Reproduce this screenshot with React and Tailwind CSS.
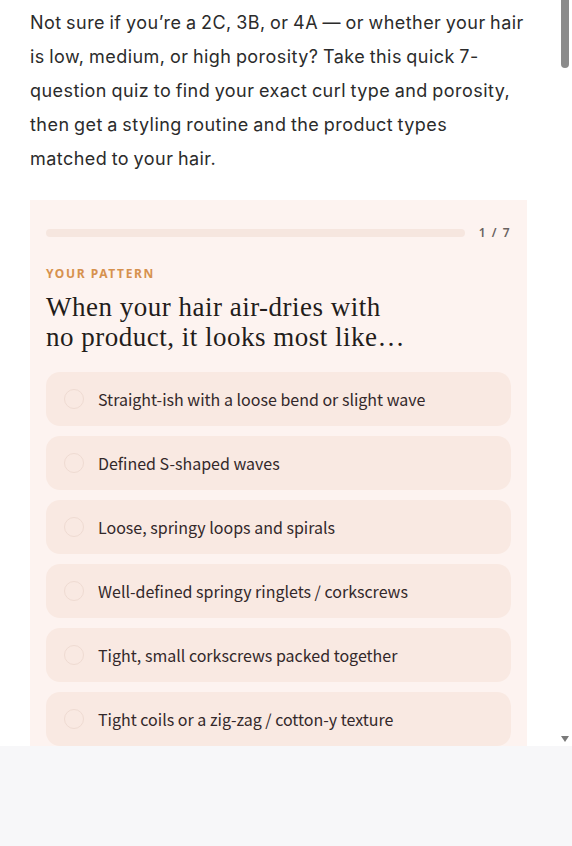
const options = [
  "Straight-ish with a loose bend or slight wave",
  "Defined S-shaped waves",
  "Loose, springy loops and spirals",
  "Well-defined springy ringlets / corkscrews",
  "Tight, small corkscrews packed together",
  "Tight coils or a zig-zag / cotton-y texture",
];

function Option({ label }) {
  return (
    <button className="flex h-[54px] w-full items-center gap-[14px] rounded-[14px] bg-[#f9e9e2] pl-[18px] text-left">
      <span className="h-[20px] w-[20px] shrink-0 rounded-full border-[1.5px] border-[#efdbd2]" />
      <span className="font-['Noto_Sans_CJK_KR','Noto_Sans',sans-serif] text-[16px] text-[#33282a]">
        {label}
      </span>
    </button>
  );
}

function Scrollbar() {
  return (
    <div className="flex w-[15px] shrink-0 flex-col items-center justify-between bg-white pb-[4px]">
      <div className="h-[68px] w-[8px] rounded-b-full bg-[#8b8b8b]" />
      <div className="h-0 w-0 border-x-[4.5px] border-t-[6px] border-x-transparent border-t-[#7a7a7a]" />
    </div>
  );
}

export default function App() {
  return (
    <div className="flex h-[846px] flex-col bg-[#f7f7f9]">
      <div className="flex h-[746px] shrink-0 overflow-hidden bg-white">
        <div className="min-w-0 flex-1 px-[30px] pt-[6px]">
          <p className="font-['Inter',sans-serif] text-[18px] leading-[34px] tracking-[0.45px] text-[#2b2b2b] [word-spacing:-1px]">
            Not sure if you’re a 2C, 3B, or 4A — or whether your hair is low,
            medium, or high porosity? Take this quick 7-question quiz to find
            your exact curl type and porosity, then get a styling routine and
            the product types matched to your hair.
          </p>

          <div className="mt-[24px] bg-[#fdf3f0] px-[16px] pt-[24px] pb-[24px]">
            <div className="flex items-center gap-[14px]">
              <div className="h-[8px] flex-1 rounded-full bg-[#f6e6df]" />
              <span className="font-['Noto_Sans',sans-serif] text-[12px] font-semibold tracking-[1.5px] text-[#6a6260]">
                1 / 7
              </span>
            </div>

            <div className="mt-[23px] font-['Noto_Sans',sans-serif] text-[12px] font-bold tracking-[1.6px] text-[#d6914e]">
              YOUR PATTERN
            </div>
            <h2 className="mt-[9px] max-w-[360px] font-['Liberation_Serif',serif] text-[27px] leading-[30px] tracking-[0.5px] text-[#231c1a]">
              When your hair air-dries with no product, it looks most like…
            </h2>

            <div className="mt-[20px] flex flex-col gap-[10px]">
              {options.map((o) => (
                <Option key={o} label={o} />
              ))}
            </div>
          </div>
        </div>
        <Scrollbar />
      </div>
    </div>
  );
}
